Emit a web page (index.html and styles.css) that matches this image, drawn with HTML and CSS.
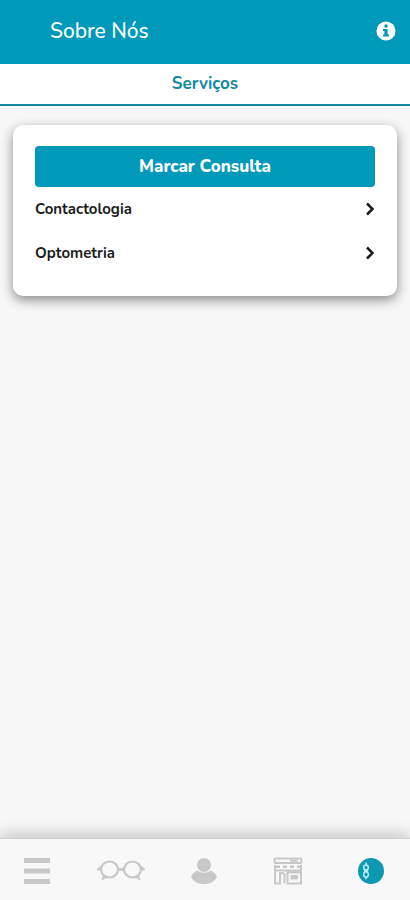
FILE: index.html
```html
<!DOCTYPE html>
<html lang="pt">
<head>
  <meta charset="UTF-8">
  <meta name="viewport" content="width=device-width, initial-scale=1.0">
  <title>Sobre Nós</title>
  <link rel="stylesheet" href="styles.css">
</head>
<body>
  <header class="topbar">
    <h1>Sobre Nós</h1>
    <button type="button" class="info-btn" aria-label="Informações">
      <svg viewBox="0 0 20 20" width="20" height="20">
        <circle cx="10" cy="10" r="9.5" fill="#fff"/>
        <circle cx="10" cy="5" r="1.8" fill="#0099ba"/>
        <path d="M7 8h4.600v5.400h1.400v2H7v-2h1.400V10H7z" fill="#0099ba"/>
      </svg>
    </button>
  </header>

  <nav class="tabs">
    <a href="#servicos" class="tab">Serviços</a>
  </nav>

  <main>
    <section class="card" id="servicos">
      <button type="button" class="book-btn">Marcar Consulta</button>
      <a href="#contactologia" class="service">
        <span>Contactologia</span>
        <svg viewBox="0 0 10 14" width="10" height="14"><path d="M2 1.500L7.500 7 2 12.500"/></svg>
      </a>
      <a href="#optometria" class="service">
        <span>Optometria</span>
        <svg viewBox="0 0 10 14" width="10" height="14"><path d="M2 1.500L7.500 7 2 12.500"/></svg>
      </a>
    </section>
  </main>

  <nav class="bottom-nav">
    <a href="#menu" aria-label="Menu">
      <svg viewBox="0 0 26 28" width="26" height="28" fill="currentColor">
        <path d="M0 1h26v5H0zM0 11.500h26v5H0zM0 22h26v5H0z"/>
      </svg>
    </a>
    <a href="#oculos" aria-label="Óculos">
      <svg viewBox="0 0 48 24" width="48" height="24" fill="none" stroke="currentColor" stroke-width="2.200">
        <ellipse cx="12.500" cy="10.500" rx="8.500" ry="8"/>
        <ellipse cx="35.500" cy="10.500" rx="8.500" ry="8"/>
        <path d="M20.500 9.500q3.500 1.500 7 0M20.500 11.500q3.500-1.500 7 0M0 10.500h4M44 10.500h4M1 10.500L5 7.500M47 10.500l-4-3M7 16.500L5.500 21M5.500 19l5-1M41 16.500l1.500 4.500M42.500 19l-5-1"/>
      </svg>
    </a>
    <a href="#perfil" aria-label="Perfil">
      <svg viewBox="0 0 26 28" width="26" height="28" fill="currentColor">
        <circle cx="13" cy="8" r="7"/>
        <path d="M6.500 13.500c3 3 10 3 13 0C22.500 14.500 25 17 26 19.500 23.500 25 19 27 13 27S2.500 25 0 19.500c1-2.500 3.500-5 6.500-6z"/>
      </svg>
    </a>
    <a href="#loja" aria-label="Loja">
      <svg viewBox="0 0 30 28" width="30" height="28" fill="none" stroke="currentColor" stroke-width="2">
        <rect x="1.500" y="1.500" width="27" height="4.500" rx="1"/>
        <path d="M17 3.700h8" stroke-width="2"/>
        <path d="M3 9.800h25" stroke-width="2.500" stroke-dasharray="4 3"/>
        <path d="M2 8v18.500h5V17.500q2-3 4.500 0v9M2 13.500h26M28 8v18.500H14.500V15.500H28M7 15v11"/>
        <path d="M18 18.500h6.500v3.500H18z" fill="currentColor" stroke-width="1"/>
      </svg>
    </a>
    <a href="#sobre" class="active" aria-label="Sobre Nós" aria-current="page">
      <svg viewBox="0 0 28 28" width="28" height="28">
        <circle cx="14" cy="14" r="13" fill="currentColor"/>
        <g fill="none" stroke="#b9edf5" stroke-width="1.500">
          <ellipse cx="9" cy="10.500" rx="2.300" ry="2.500"/>
          <ellipse cx="9" cy="17.500" rx="2.300" ry="2.800"/>
          <path d="M9 5.500V8M7 13l4 2M11 13l-4 2M9 20.300v2"/>
        </g>
      </svg>
    </a>
  </nav>
</body>
</html>
```

FILE: styles.css
```css
* {
  box-sizing: border-box;
}
body {
  font-family: Nunito, 'Open Sans', sans-serif;
  margin: 0;
  min-height: 100vh;
  display: flex;
  flex-direction: column;
  background: #f7f7f7;
  color: #1c1c1c;
}
a {
  color: inherit;
  text-decoration: none;
}
button {
  font-family: inherit;
  border: none;
  cursor: pointer;
}
svg {
  display: block;
}
.topbar {
  display: flex;
  align-items: center;
  justify-content: space-between;
  height: 64px;
  padding: 0 14px 3px 50px;
  background: #0099ba;
  color: #fff;
}
.topbar h1 {
  margin: 0;
  font-size: 21px;
  font-weight: 500;
}
.info-btn {
  padding: 0;
  background: none;
}
.tabs {
  display: flex;
  background: #fff;
  border-bottom: 2px solid #1488a0;
}
.tab {
  flex: 1;
  line-height: 40px;
  text-align: center;
  font-size: 17px;
  font-weight: 700;
  color: #1488a0;
}
main {
  flex: 1;
  padding: 19px 13px;
}
.card {
  padding: 21px 22px;
  background: #fff;
  border-radius: 10px;
  box-shadow: 0 4px 12px rgba(0, 0, 0, 0.45);
}
.book-btn {
  display: block;
  width: 100%;
  height: 41px;
  padding: 0;
  border-radius: 4px;
  background: #0099ba;
  color: #fff;
  font-size: 17px;
  font-weight: 800;
}
.service {
  display: flex;
  align-items: center;
  justify-content: space-between;
  height: 44px;
  font-size: 15px;
  font-weight: 700;
}
.service svg {
  fill: none;
  stroke: currentColor;
  stroke-width: 2.5;
}
.bottom-nav {
  display: flex;
  align-items: center;
  justify-content: space-between;
  height: 62px;
  padding: 2px 15px 0 13px;
  background: #f8f8f8;
  border-top: 1px solid #d2d2d2;
  box-shadow: 0 -2px 16px rgba(0, 0, 0, 0.25);
  color: #c8c8c8;
}
.bottom-nav a {
  display: flex;
  justify-content: center;
  width: 48px;
}
.bottom-nav .active {
  color: #0c97b2;
}
```
